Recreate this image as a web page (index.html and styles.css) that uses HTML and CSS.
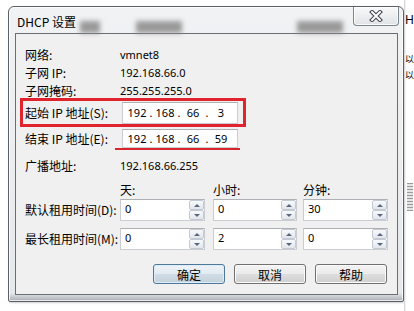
FILE: index.html
```html
<!DOCTYPE html>
<html lang="zh-CN">
<head>
    <meta charset="UTF-8">
    <title>DHCP 设置</title>
    <link rel="stylesheet" href="styles.css">
</head>
<body>
    <div class="window">
        <div class="titlebar">
            <span class="title">DHCP 设置</span>
            <span class="haze haze-a"></span>
            <span class="haze haze-b"></span>
            <span class="haze haze-c"></span>
            <button class="close-btn" aria-label="关闭">
                <svg width="14" height="12" viewBox="0 0 14 12">
                    <path d="M3 2 L11 10 M11 2 L3 10" stroke="#3a3f45" stroke-width="4" stroke-linecap="square" fill="none"/>
                    <path d="M3 2 L11 10 M11 2 L3 10" stroke="#ffffff" stroke-width="2" stroke-linecap="square" fill="none"/>
                </svg>
            </button>
        </div>

        <div class="client">
            <!-- Network info -->
            <div class="info-row"><span class="label">网络:</span><span class="value">vmnet8</span></div>
            <div class="info-row"><span class="label">子网 IP:</span><span class="value">192.168.66.0</span></div>
            <div class="info-row"><span class="label">子网掩码:</span><span class="value">255.255.255.0</span></div>

            <div class="ip-row marked">
                <span class="label">起始 IP 地址(S):</span>
                <div class="ip-box">
                    <span class="octet">192</span><span class="dot">.</span>
                    <span class="octet">168</span><span class="dot">.</span>
                    <span class="octet">66</span><span class="dot">.</span>
                    <span class="octet">3</span>
                </div>
            </div>
            <div class="ip-row">
                <span class="label">结束 IP 地址(E):</span>
                <div class="ip-box short">
                    <span class="octet">192</span><span class="dot">.</span>
                    <span class="octet">168</span><span class="dot">.</span>
                    <span class="octet">66</span><span class="dot">.</span>
                    <span class="octet">59</span>
                </div>
            </div>
            <div class="underline"></div>

            <div class="info-row broadcast"><span class="label">广播地址:</span><span class="value">192.168.66.255</span></div>

            <!-- Lease times -->
            <div class="lease">
                <span></span>
                <span class="col-head">天:</span>
                <span class="col-head">小时:</span>
                <span class="col-head">分钟:</span>

                <span class="label">默认租用时间(D):</span>
                <div class="spin"><span class="spin-value">0</span><span class="spin-btns"><span class="up"></span><span class="down"></span></span></div>
                <div class="spin narrow"><span class="spin-value">0</span><span class="spin-btns"><span class="up"></span><span class="down"></span></span></div>
                <div class="spin"><span class="spin-value">30</span><span class="spin-btns"><span class="up"></span><span class="down"></span></span></div>

                <span class="label">最长租用时间(M):</span>
                <div class="spin"><span class="spin-value">0</span><span class="spin-btns"><span class="up"></span><span class="down"></span></span></div>
                <div class="spin narrow"><span class="spin-value">2</span><span class="spin-btns"><span class="up"></span><span class="down"></span></span></div>
                <div class="spin"><span class="spin-value">0</span><span class="spin-btns"><span class="up"></span><span class="down"></span></span></div>
            </div>

            <div class="buttons">
                <button class="btn btn-default">确定</button>
                <button class="btn">取消</button>
                <button class="btn">帮助</button>
            </div>
        </div>
    </div>

    <!-- Window behind the dialog -->
    <div class="backdrop">
        <span class="bg-h">H</span>
        <span class="bg-glyph">以</span>
        <span class="bg-glyph">以</span>
        <span class="bg-grip"></span>
    </div>
</body>
</html>
```

FILE: styles.css
```css
body {
    margin: 0;
    width: 414px;
    height: 311px;
    overflow: hidden;
    display: flex;
    align-items: flex-start;
    background: #fff;
    font-family: "Noto Sans CJK SC", "Noto Sans", sans-serif;
    font-size: 12px;
    color: #000;
}

.window {
    box-sizing: border-box;
    width: 396px;
    height: 296px;
    margin: 6px 0 0 8px;
    padding: 0 5px 6px 6px;
    display: flex;
    flex-direction: column;
    border: 1px solid #596067;
    border-radius: 6px 6px 2px 2px;
    background:
        linear-gradient(to top, #a9adb1 0, #cfd2d5 5px, rgba(255, 255, 255, 0) 8px),
        linear-gradient(#f1f2f4, #e5e8eb);
    box-shadow: inset 0 0 0 1px rgba(255, 255, 255, 0.75), 1px 1px 2px rgba(0, 0, 0, 0.2);
}

.titlebar {
    height: 26px;
    flex-shrink: 0;
    display: flex;
    align-items: flex-start;
}

.title {
    width: 58px;
    margin: 7px 0 0 2px;
    line-height: 16px;
    white-space: nowrap;
}

.haze {
    height: 12px;
    margin-top: 14px;
    background: #8a8a8a;
    filter: blur(2.5px);
    opacity: 0.85;
}

.haze-a { width: 20px; margin-left: 5px; }
.haze-b { width: 46px; margin-left: 36px; }
.haze-c { width: 46px; margin-left: 115px; }

.close-btn {
    box-sizing: border-box;
    width: 46px;
    height: 19px;
    margin: 0 -1px 0 auto;
    padding: 0;
    display: flex;
    align-items: center;
    justify-content: center;
    border: 1px solid #7d858e;
    border-top: 0;
    border-radius: 0 0 4px 4px;
    background: linear-gradient(#f8f9fa, #e0e3e7);
    box-shadow: inset 0 0 0 1px rgba(255, 255, 255, 0.8);
}

.client {
    flex: 1;
    padding: 12px 9px 0 9px;
    border: 1px solid #686e74;
    background: #f0f0f0;
}

.info-row {
    display: flex;
    line-height: 18px;
}

.label {
    width: 95px;
    flex-shrink: 0;
    white-space: nowrap;
}

.value {
    font-family: "Noto Sans", sans-serif;
    font-size: 11px;
}

.info-row.broadcast {
    margin-top: 7px;
}

/* IP address rows */
.ip-row {
    display: flex;
    align-items: center;
    height: 19px;
    margin-top: 2px;
}

.ip-row .label {
    width: 97px;
}

.ip-row.marked {
    box-sizing: border-box;
    width: 226px;
    height: 29px;
    margin: -2px 0 0 -5px;
    padding-left: 2px;
    border: 3px solid #e0232d;
}

.ip-box {
    box-sizing: border-box;
    width: 116px;
    height: 22px;
    padding-left: 3px;
    display: flex;
    align-items: center;
    background: #fff;
    border: 1px solid #c9ccd1;
    border-top-color: #adb0b5;
    font-family: "Noto Sans", sans-serif;
    font-size: 11px;
}

.ip-box.short {
    height: 19px;
}

.octet {
    width: 22px;
    text-align: center;
}

.dot {
    width: 6px;
    text-align: center;
}

.underline {
    width: 125px;
    height: 2px;
    margin-left: 90px;
    background: #d8262f;
}

/* Lease time grid */
.lease {
    display: grid;
    grid-template-columns: 95px 93px 90px 85px;
    grid-template-rows: 16px 23px 29px;
    align-items: end;
    margin-top: 7px;
}

.col-head {
    line-height: 16px;
}

.lease .label {
    line-height: 22px;
}

.spin {
    box-sizing: border-box;
    width: 85px;
    height: 22px;
    display: flex;
    justify-content: space-between;
    background: #fff;
    border: 1px solid #c9ccd1;
    border-top-color: #adb0b5;
}

.spin.narrow {
    width: 84px;
}

.spin-value {
    padding-left: 4px;
    line-height: 17px;
    font-family: "Noto Sans", sans-serif;
    font-size: 11px;
}

.spin-btns {
    width: 15px;
    display: flex;
    flex-direction: column;
}

.spin-btns span {
    box-sizing: border-box;
    flex: 1;
    display: flex;
    align-items: center;
    justify-content: center;
    border: 1px solid #c3cad3;
    border-radius: 2px;
    background: linear-gradient(#f8f9fb, #e2e6eb);
}

.spin-btns span::before {
    content: "";
    border-left: 3px solid transparent;
    border-right: 3px solid transparent;
    border-bottom: 3px solid #5a6680;
}

.spin-btns .down::before {
    border-bottom: 0;
    border-top: 3px solid #5a6680;
}

/* Dialog buttons */
.buttons {
    display: flex;
    justify-content: flex-end;
    gap: 9px;
    margin-top: 14px;
    padding-right: 1px;
}

.btn {
    box-sizing: border-box;
    width: 72px;
    height: 20px;
    padding: 0;
    border: 1px solid #707070;
    border-radius: 3px;
    background: linear-gradient(#f3f3f3 0%, #ebebeb 50%, #dddddd 51%, #cfcfcf 100%);
    box-shadow: inset 0 0 0 1px #fbfbfb;
    font-family: inherit;
    font-size: 12px;
    line-height: 17px;
    color: #000;
}

.btn-default {
    border-color: #4f7798;
    background: linear-gradient(#eef3f7 0%, #e2eaf0 50%, #d0dce5 51%, #c3d1dc 100%);
    box-shadow: inset 0 0 0 1px #dcecf8;
}

/* Other window peeking out on the right */
.backdrop {
    flex: 1;
    height: 311px;
    overflow: hidden;
    display: flex;
    flex-direction: column;
    background: linear-gradient(to right, #c9cbcd 0, #fff 2px);
}

.bg-h {
    margin: 13px 0 0 1px;
    line-height: 14px;
    font-family: "Noto Sans", sans-serif;
}

.bg-glyph {
    margin-left: 1px;
    font-size: 9px;
    line-height: 16px;
}

.bg-h + .bg-glyph {
    margin-top: 24px;
}

.bg-grip {
    width: 6px;
    height: 28px;
    margin: 100px 0 0 3px;
    background: repeating-linear-gradient(#9a9a9a 0 1px, #e4e4e4 1px 3px);
}
```
